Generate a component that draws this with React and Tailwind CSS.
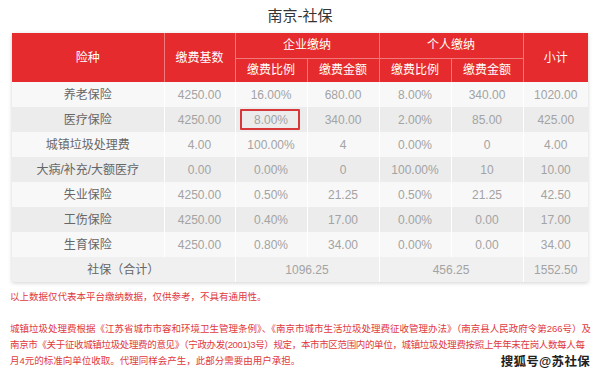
const rows = [
  ["养老保险", "4250.00", "16.00%", "680.00", "8.00%", "340.00", "1020.00"],
  ["医疗保险", "4250.00", "8.00%", "340.00", "2.00%", "85.00", "425.00"],
  ["城镇垃圾处理费", "4.00", "100.00%", "4", "0.00%", "0", "4.00"],
  ["大病/补充/大额医疗", "0.00", "0.00%", "0", "100.00%", "10", "10.00"],
  ["失业保险", "4250.00", "0.50%", "21.25", "0.50%", "21.25", "42.50"],
  ["工伤保险", "4250.00", "0.40%", "17.00", "0.00%", "0.00", "17.00"],
  ["生育保险", "4250.00", "0.80%", "34.00", "0.00%", "0.00", "34.00"],
];

const font = { fontFamily: '"Liberation Sans", "Noto Sans CJK SC", sans-serif' };

export default function App() {
  return (
    <div className="w-[600px] h-[378px] bg-white overflow-hidden relative" style={font}>
      {/* Title */}
      <div className="h-[33px] flex items-center justify-center text-[15px] text-[#333] pb-[1px]">
        南京-社保
      </div>

      {/* Table */}
      <div className="mx-[12px] w-[576px] shadow-[0_1px_4px_rgba(0,0,0,0.18)]">
        <table className="w-full border-collapse table-fixed text-[12px]">
          <colgroup>
            <col className="w-[152px]" />
            <col className="w-[71px]" />
            <col className="w-[72px]" />
            <col className="w-[72px]" />
            <col className="w-[72px]" />
            <col className="w-[72px]" />
            <col className="w-[65px]" />
          </colgroup>
          <thead className="bg-[#e52b2d] text-white">
            <tr className="h-[25px]">
              <th rowSpan={2} className="font-normal border-r border-[#f07a7a]">险种</th>
              <th rowSpan={2} className="font-normal border-r border-[#f07a7a]">缴费基数</th>
              <th colSpan={2} className="font-normal border-r border-b border-[#f07a7a]">企业缴纳</th>
              <th colSpan={2} className="font-normal border-r border-b border-[#f07a7a]">个人缴纳</th>
              <th rowSpan={2} className="font-normal">小计</th>
            </tr>
            <tr className="h-[24px]">
              <th className="font-normal border-r border-[#f07a7a]">缴费比例</th>
              <th className="font-normal border-r border-[#f07a7a]">缴费金额</th>
              <th className="font-normal border-r border-[#f07a7a]">缴费比例</th>
              <th className="font-normal border-r border-[#f07a7a]">缴费金额</th>
            </tr>
          </thead>
          <tbody className="text-[#a3a3a3]">
            {rows.map((r, i) => (
              <tr key={r[0]} className={`h-[25px] ${i % 2 === 0 ? "bg-[#f8f8f8]" : "bg-[#ececec]"}`}>
                {r.map((c, j) => (
                  <td
                    key={j}
                    className={`text-center p-0 border-r border-white last:border-r-0 ${j === 0 ? "text-[#666]" : ""} ${i === 1 && j === 2 ? "relative" : ""}`}
                  >
                    {c}
                    {i === 1 && j === 2 && (
                      <span className="absolute left-[4px] top-[2px] w-[60px] h-[21px] border-2 border-[#d9383a] rounded-[1px]" />
                    )}
                  </td>
                ))}
              </tr>
            ))}
            <tr className="h-[25px] bg-[#f0f0f0]">
              <td colSpan={2} className="text-center text-[#666] border-r border-white">社保（合计）</td>
              <td colSpan={2} className="text-center border-r border-white">1096.25</td>
              <td colSpan={2} className="text-center border-r border-white">456.25</td>
              <td className="text-center">1552.50</td>
            </tr>
          </tbody>
        </table>
      </div>

      {/* Notes */}
      <div className="px-[10px] text-[9.5px] text-[#e0393e] leading-[16px] whitespace-nowrap">
        <div className="mt-[7px]">以上数据仅代表本平台缴纳数据，仅供参考，不具有通用性。</div>
        <div className="mt-[16px]">
          城镇垃圾处理费根据《江苏省城市市容和环境卫生管理条例》、《南京市城市生活垃圾处理费征收管理办法》（南京县人民政府令第266号）及
        </div>
        <div className="tracking-[-0.35px]">
          南京市《关于征收城镇垃圾处理费的意见》（宁政办发(2001)3号）规定，本市市区范围内的单位，城镇垃圾处理费按照上年年末在岗人数每人每
        </div>
        <div>月4元的标准向单位收取。代理同样会产生，此部分需要由用户承担。</div>
      </div>

      {/* Watermark */}
      <div className="absolute right-[10px] bottom-[6px] text-[12.5px] font-bold text-[#222] tracking-[0.3px]">
        搜狐号@苏社保
      </div>
    </div>
  );
}
